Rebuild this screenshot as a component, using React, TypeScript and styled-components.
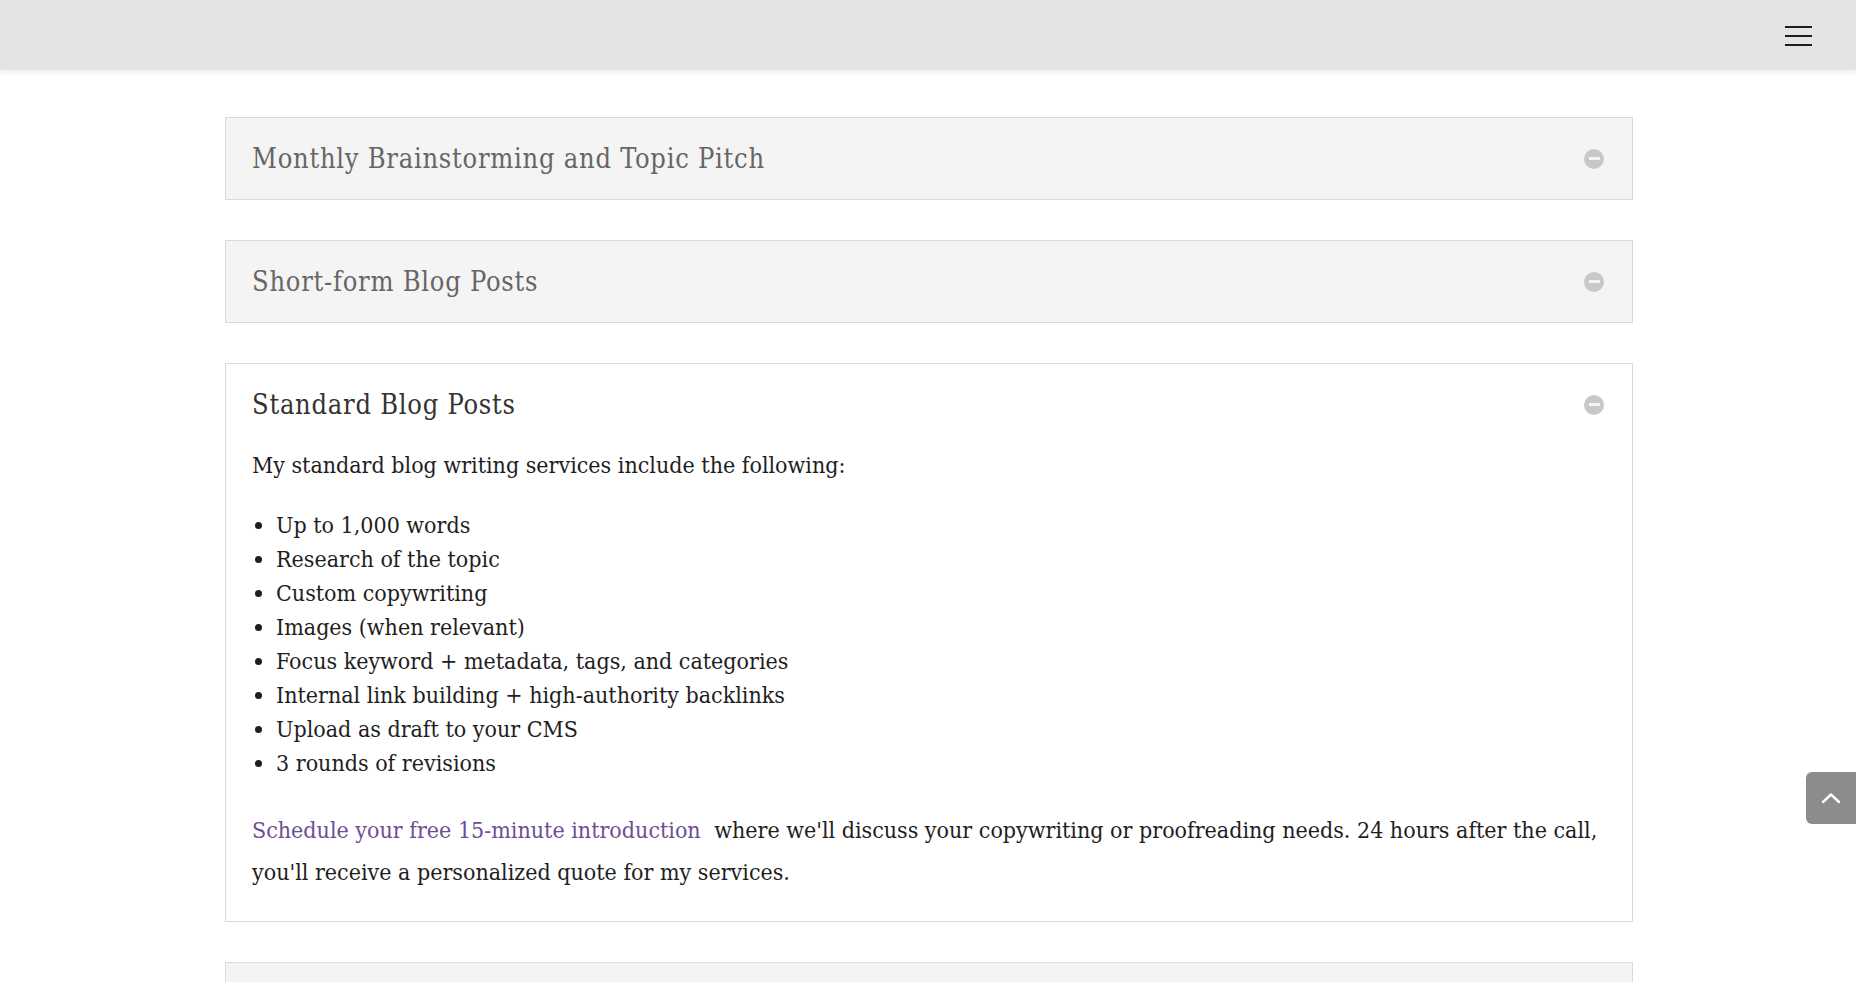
import { createGlobalStyle, styled } from 'styled-components';

const GlobalStyle = createGlobalStyle`
  html, body {
    margin: 0;
    padding: 0;
    background: #fff;
    overflow: hidden;
  }
  body {
    font-family: "DejaVu Serif", "Liberation Serif", serif;
    font-stretch: condensed;
    color: #222;
  }
`

const Header = styled.header`
  height: 70px;
  background: #e4e4e4;
  box-shadow: 0 2px 6px rgba(0, 0, 0, 0.08);
  display: flex;
  align-items: center;
  justify-content: flex-end;
  padding-right: 44px;
  position: relative;
  z-index: 2;
`

const MenuButton = styled.button`
  width: 27px;
  height: 20px;
  margin-top: 1px;
  padding: 0;
  border: 0;
  background: none;
  display: flex;
  flex-direction: column;
  justify-content: space-between;

  span {
    display: block;
    height: 2px;
    background: #1d1d1d;
  }
`

const Content = styled.main`
  width: 1408px;
  margin-left: calc(50% - 703px);
  padding-top: 47px;
  display: flex;
  flex-direction: column;
  gap: 40px;
`

const Toggle = styled.section<{ $open?: boolean }>`
  border: 1px solid #dadada;
  background: ${p => (p.$open ? '#fff' : '#f4f4f4')};
  padding: 23px 28px ${p => (p.$open ? '28px' : '23px')} 26px;
`

const ToggleHead = styled.div`
  display: flex;
  align-items: center;
  justify-content: space-between;
`

const ToggleTitle = styled.h5<{ $open?: boolean }>`
  margin: 0;
  font-family: "DejaVu Serif", serif;
  font-stretch: semi-condensed;
  font-weight: 400;
  font-size: 27px;
  line-height: 35px;
  letter-spacing: 0.75px;
  color: ${p => (p.$open ? '#333' : '#666')};
`

const ToggleIcon = styled.span`
  width: 20px;
  height: 20px;
  border-radius: 50%;
  background: #c8c8c8;
  display: flex;
  align-items: center;
  justify-content: center;

  &::after {
    content: '';
    width: 11px;
    height: 3px;
    background: #f4f4f4;
  }
`

const ToggleBody = styled.div`
  padding-top: 26px;
  font-size: 23px;
  color: #1e1e1e;
`

const Intro = styled.p`
  margin: 0 0 26px;
  line-height: 34px;
`

const List = styled.ul`
  margin: 0 0 29px;
  padding-left: 24px;
  line-height: 34px;
`

const Closing = styled.p`
  margin: 0;
  line-height: 42px;
`

const Link = styled.a`
  color: #6d4e94;
  text-decoration: none;
  margin-right: 7px;
`

const BackToTop = styled.button`
  position: fixed;
  right: 0;
  top: 772px;
  width: 50px;
  height: 52px;
  border: 0;
  border-radius: 6px 0 0 6px;
  background: #8c8c8c;
  display: flex;
  align-items: center;
  justify-content: center;
  padding: 0;
`

const items = [
  'Up to 1,000 words',
  'Research of the topic',
  'Custom copywriting',
  'Images (when relevant)',
  'Focus keyword + metadata, tags, and categories',
  'Internal link building + high-authority backlinks',
  'Upload as draft to your CMS',
  '3 rounds of revisions',
]

export default function App() {
  return (
    <>
      <GlobalStyle />
      <Header>
        <MenuButton aria-label="menu">
          <span />
          <span />
          <span />
        </MenuButton>
      </Header>

      <Content>
        <Toggle>
          <ToggleHead>
            <ToggleTitle>Monthly Brainstorming and Topic Pitch</ToggleTitle>
            <ToggleIcon />
          </ToggleHead>
        </Toggle>

        <Toggle>
          <ToggleHead>
            <ToggleTitle>Short-form Blog Posts</ToggleTitle>
            <ToggleIcon />
          </ToggleHead>
        </Toggle>

        <Toggle $open>
          <ToggleHead>
            <ToggleTitle $open>Standard Blog Posts</ToggleTitle>
            <ToggleIcon />
          </ToggleHead>
          <ToggleBody>
            <Intro>My standard blog writing services include the following:</Intro>
            <List>
              {items.map((item, index) => (
                <li key={index}>{item}</li>
              ))}
            </List>
            <Closing>
              <Link href="#">Schedule your free 15-minute introduction</Link>{' '}
              where we'll discuss your copywriting or proofreading needs. 24 hours after the call, you'll receive a personalized quote for my services.
            </Closing>
          </ToggleBody>
        </Toggle>

        <Toggle>
          <ToggleHead>
            <ToggleTitle>Long-form Blog Posts</ToggleTitle>
            <ToggleIcon />
          </ToggleHead>
        </Toggle>
      </Content>

      <BackToTop aria-label="back to top">
        <svg width="20" height="12" viewBox="0 0 20 12" fill="none">
          <path d="M2 10 L10 2.5 L18 10" stroke="#fff" strokeWidth="2.4" strokeLinecap="round" strokeLinejoin="round" />
        </svg>
      </BackToTop>
    </>
  )
}
